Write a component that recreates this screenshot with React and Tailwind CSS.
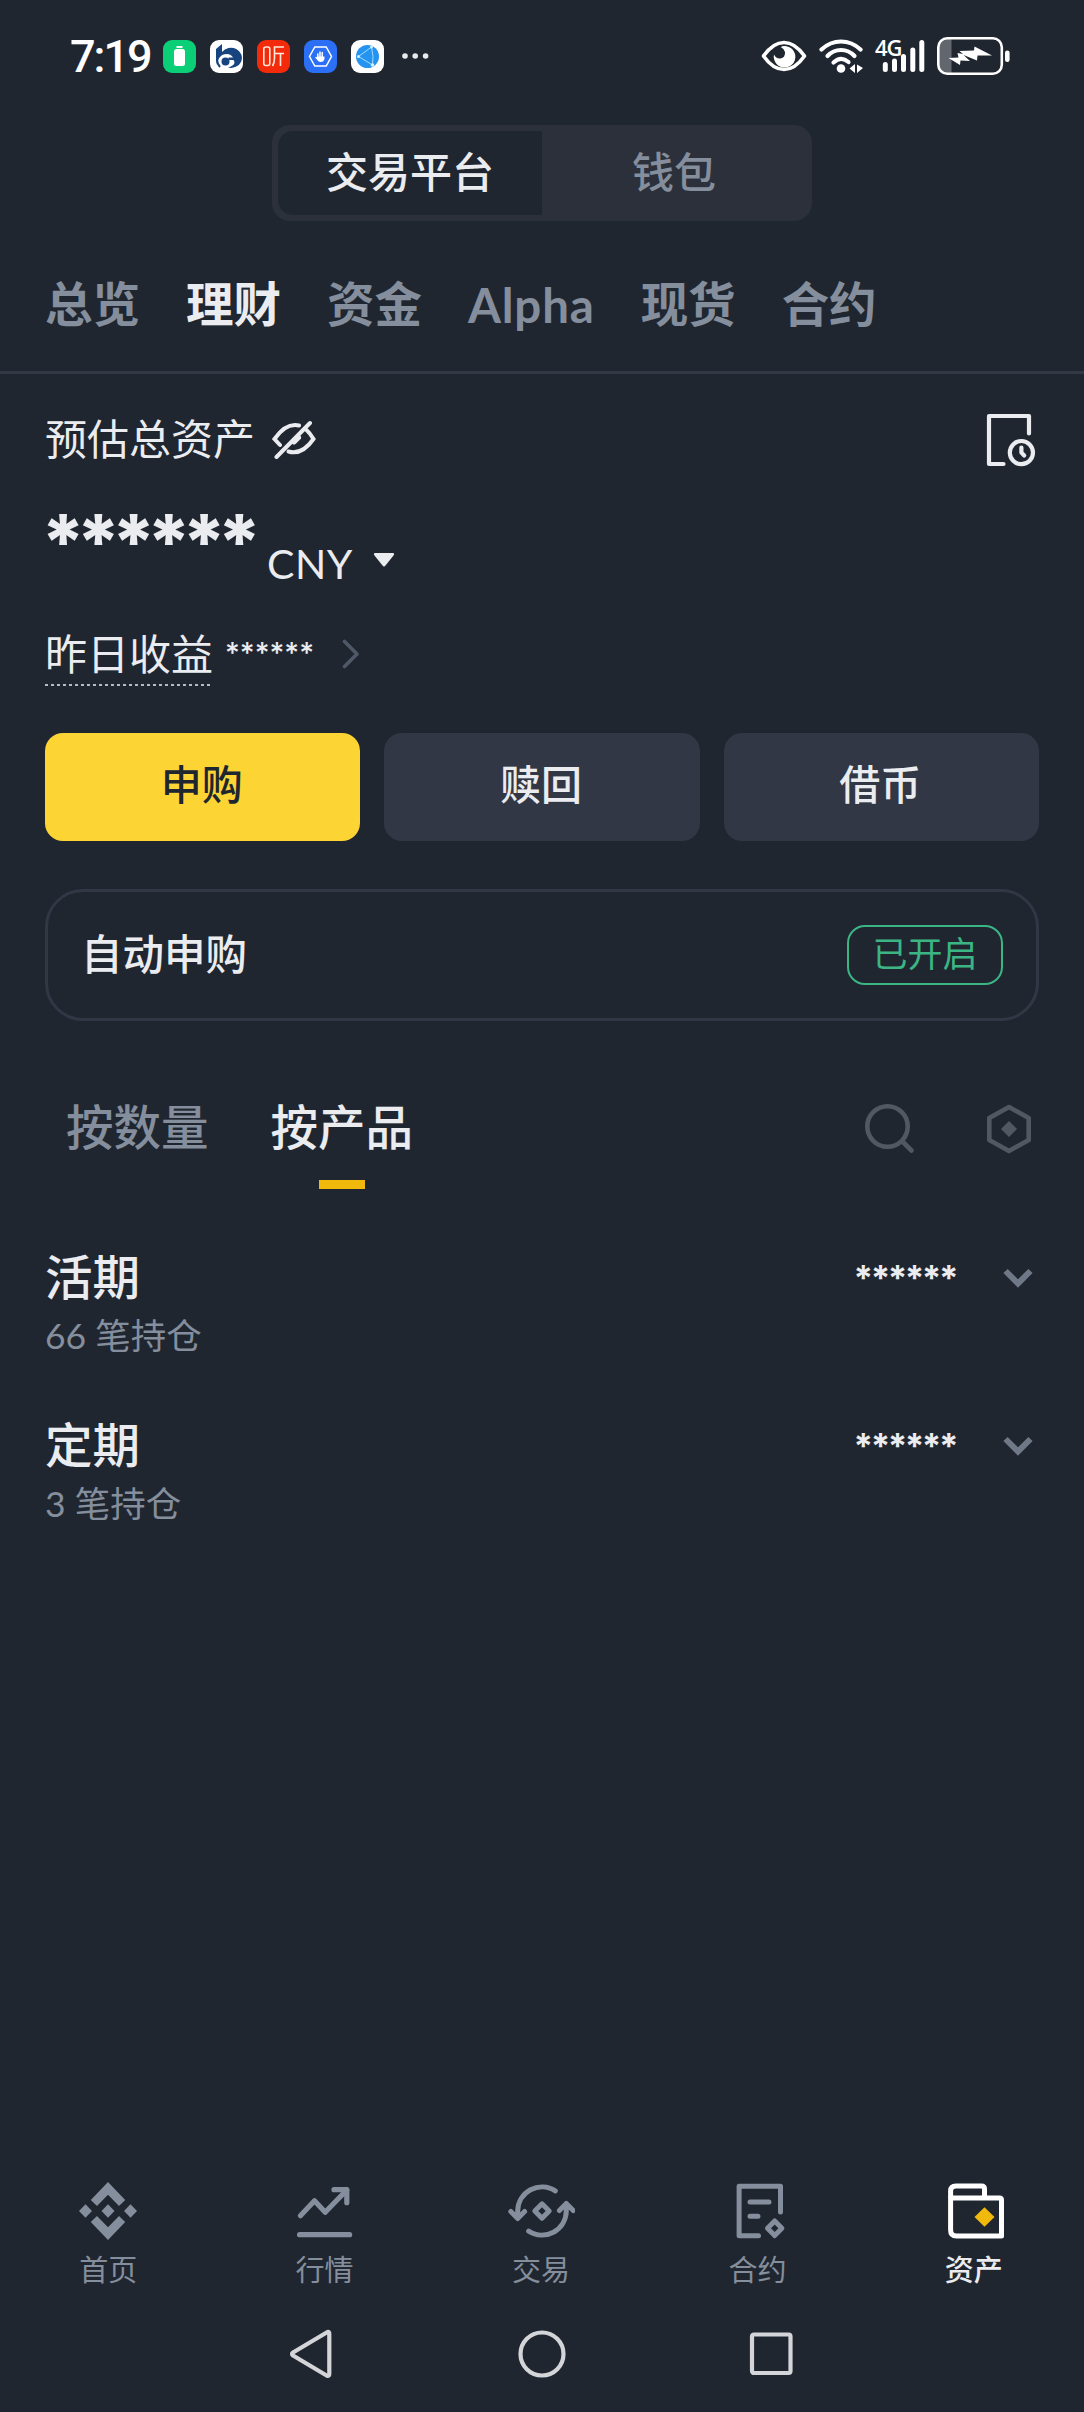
import { useState } from 'react';

const tabs = ['总览', '理财', '资金', 'Alpha', '现货', '合约'];

const actions = [
    { label: '申购', primary: true },
    { label: '赎回' },
    { label: '借币' },
];

const products = [
    { name: '活期', count: '66 笔持仓' },
    { name: '定期', count: '3 笔持仓' },
];

const HomeIcon = () => (
    <svg width="68" height="60" viewBox="0 0 68 60" fill="currentColor">
        <path d="M34 1 L51.2 19 L45 25 L34 13.8 L23 25 L16.8 19 Z" />
        <path d="M34 59 L51.2 41 L45 35 L34 46.2 L23 35 L16.8 41 Z" />
        <path d="M34 23.3 L40.5 30 L34 36.7 L27.5 30 Z" />
        <path d="M11.5 23.3 L18 30 L11.5 36.7 L5 30 Z" />
        <path d="M56.5 23.3 L63 30 L56.5 36.7 L50 30 Z" />
    </svg>
);

const MarketIcon = () => (
    <svg width="68" height="60" viewBox="0 0 68 60" fill="none" stroke="currentColor" strokeWidth="5.2" strokeLinecap="round" strokeLinejoin="round">
        <path d="M9.4 34.7 L23.5 19.7 L34.2 31.3 L55.8 9" />
        <path d="M43 8.7 H55.8 V21.7" />
        <path d="M8.6 53.7 H58.6" />
    </svg>
);

const TradeIcon = () => (
    <svg width="68" height="60" viewBox="-1 0 68 60" fill="none" stroke="currentColor" strokeWidth="5" strokeLinecap="round" strokeLinejoin="round">
        <path d="M47.3 9.8 A24.4 24.4 0 0 0 9.7 30 V37 M2.8 30.5 L9.7 37.5 L16.6 30.5" />
        <path d="M20.7 50.2 A24.4 24.4 0 0 0 58.3 30 V23 M51.4 29.5 L58.3 22.5 L65.2 29.5" />
        <path d="M34 22.8 L41.2 30 L34 37.2 L26.8 30 Z" />
    </svg>
);

const FuturesIcon = () => (
    <svg width="68" height="60" viewBox="-1.5 0 68 60" fill="none" stroke="currentColor" strokeWidth="5" strokeLinecap="round" strokeLinejoin="round">
        <path d="M56 31 V5.2 H14.6 V54.8 H34" />
        <path d="M25.5 21 H44.5 M25.5 35.2 H33.5" />
        <path d="M50.2 40 L57.4 47.3 L50.2 54.6 L43 47.3 Z" />
    </svg>
);

const AssetsIcon = () => (
    <svg width="68" height="60" viewBox="-1.5 0 68 60" fill="none" stroke="#ffffff" strokeWidth="5" strokeLinejoin="round">
        <path d="M9.1 17 V10 Q9.1 5 14.5 5 H40 Q43 5 43 8 V17" />
        <path d="M9.1 17 H58 Q60 17 60 19 V55 H15 Q9.1 55 9.1 49 Z" />
        <path d="M43 26.2 L53 36 L43 45.8 L33 36 Z" fill="#f0b90b" stroke="none" />
    </svg>
);

const navItems = [
    { label: '首页', icon: HomeIcon },
    { label: '行情', icon: MarketIcon },
    { label: '交易', icon: TradeIcon },
    { label: '合约', icon: FuturesIcon },
    { label: '资产', icon: AssetsIcon },
];

const StatusBar = () => (
    <div className="flex h-28 shrink-0 items-center justify-between pl-[70px] pr-[73px] text-white">
        <div className="flex items-center">
            <span className="w-[93px] pt-0.5 text-[45px] leading-[56px] font-medium tracking-[-2px] font-[Roboto,sans-serif]">7:19</span>
            <div className="flex gap-3.5">
                <svg width="33" height="33" viewBox="0 0 33 33">
                    <rect width="33" height="33" rx="9" fill="#0acf77" />
                    <rect x="13.5" y="6" width="6" height="2" fill="#fff" />
                    <rect x="11" y="9" width="11" height="17" rx="2.5" fill="#fff" />
                </svg>
                <svg width="33" height="33" viewBox="0 0 33 33">
                    <rect width="33" height="33" rx="9" fill="#fff" />
                    <path d="M6 9 L12 4 V15 Q7 18 6 25 Z" fill="#17437f" />
                    <path d="M12 12 A11 10 0 1 1 18 27.5 Q27 25 23.5 20 H18.5 V17.5 H23 Q20 12 12 15 Z" fill="#17437f" />
                    <path d="M10 27 Q4 20 11 14.5" stroke="#17437f" strokeWidth="2" fill="none" />
                    <circle cx="15.5" cy="21.5" r="4" fill="#17437f" />
                </svg>
                <svg width="33" height="33" viewBox="0 0 33 33" fill="none" stroke="#ffe9dc" strokeWidth="1.6">
                    <rect width="33" height="33" rx="9" fill="#f32b0a" stroke="none" />
                    <rect x="6.8" y="7" width="6" height="18.5" rx="2" />
                    <path d="M27 7 H17.5 V18 Q17.5 23 15.5 26 M17.5 13.5 H27 M23.5 13.5 V26" />
                </svg>
                <svg width="33" height="33" viewBox="0 0 33 33" fill="none">
                    <rect width="33" height="33" rx="9" fill="#2a6ff5" />
                    <path d="M10.8 7 H22.2 L27.5 16.5 L22.2 26 H10.8 L5.5 16.5 Z" stroke="#fff" strokeWidth="1.5" />
                    <path d="M13.8 14 V18 M16 12 V18 M18.2 12.5 V18 M12 17.5 L14.5 20" stroke="#fff" strokeWidth="1.5" strokeLinecap="round" />
                    <path d="M13 16.5 H20.5 V18.5 Q20 22 16.5 22 Q14 22 13 19 Z" fill="#fff" />
                </svg>
                <svg width="33" height="33" viewBox="0 0 33 33" fill="none">
                    <rect width="33" height="33" rx="9" fill="#fff" />
                    <circle cx="16.5" cy="16.5" r="11.5" fill="#2494f0" />
                    <path d="M20.5 7 L7.5 16.5 L21.5 25 M20.5 7 Q23 17 21.5 25" stroke="#a5dcff" strokeWidth="1" />
                    <circle cx="20.5" cy="7" r="1.5" fill="#d6f0ff" />
                    <circle cx="7.5" cy="16.5" r="1.5" fill="#d6f0ff" />
                    <circle cx="21.5" cy="25" r="1.8" fill="#d6f0ff" />
                </svg>
            </div>
            <svg className="ml-[18px]" width="27" height="8" viewBox="0 0 27 8" fill="#e8e9ea">
                <circle cx="3" cy="4" r="2.8" />
                <circle cx="13.2" cy="4" r="2.8" />
                <circle cx="23.6" cy="4" r="2.8" />
            </svg>
        </div>

        <div className="flex items-center">
            <svg width="46" height="34" viewBox="0 0 46 34" fill="none">
                <path d="M2.5 17 Q12 3.5 23 3.5 Q34 3.5 43.5 17 Q34 30.5 23 30.5 Q12 30.5 2.5 17 Z" stroke="#fff" strokeWidth="3.6" strokeLinejoin="round" />
                <path d="M21 7.3 A10.8 10.8 0 1 1 13 15.5 Q15 20 19.5 19.5 Q24.5 18.5 24 13 Q23.5 10 20 8.3 Z" fill="#fff" />
            </svg>
            <svg className="ml-3" width="45" height="36" viewBox="0 0 45 36" fill="none" stroke="#fff" strokeWidth="4.2" strokeLinecap="round">
                <path d="M2.5 11.5 Q11 3.5 22 3.5 Q33 3.5 41.5 11.5" />
                <path d="M8.5 18 Q14 12 22 12 Q30 12 35.5 18" />
                <path d="M14.5 24.5 Q22 17.5 29.5 24" />
                <circle cx="22" cy="30.5" r="4.3" fill="#fff" stroke="none" />
                <path d="M36 26 V35 L30.5 30.5 Z M38 35 V26.5 L44 30 Z" fill="#fff" stroke="none" />
            </svg>
            <div className="relative ml-[11px] h-9 w-[52px]">
                <svg width="52" height="36" viewBox="0 0 52 36" stroke="#fff" strokeWidth="5" strokeLinecap="round">
                    <path d="M10.3 26.5 V31.5 M19.5 23 V31.5 M28.5 18.5 V31.5 M37.8 12 V31.5 M46.8 4.5 V31.5" />
                </svg>
                <span className="absolute -top-[2px] left-0 text-[22px] leading-[22px] font-semibold font-['Open_Sans',sans-serif] tracking-[-1px]">4G</span>
            </div>
            <svg className="ml-[10px]" width="74" height="38" viewBox="0 0 74 38" fill="none">
                <path d="M2 8 Q2 2 8 2 H14.5 V36 H8 Q2 36 2 30 Z" fill="#62676f" />
                <rect x="1.3" y="1.3" width="63.5" height="35.4" rx="9" stroke="#fff" strokeWidth="2.6" />
                <rect x="68" y="13.5" width="4.6" height="11.5" rx="2.3" fill="#fff" />
                <path d="M11.5 21 L21.5 20.5 L20.5 16 L26 17 L22.5 14 L37 13.5 L37.5 9.5 L55 18.5 L40.5 18.5 L40 23.5 L26.5 18 L33 24 L23.5 23.5 L23 28 Z" fill="#fff" />
            </svg>
        </div>
    </div>
);

const App = () => {
    const [platform, setPlatform] = useState('交易平台');
    const [activeTab, setActiveTab] = useState('理财');
    const [groupBy, setGroupBy] = useState('按产品');

    return (
        <div className="flex h-[2412px] w-[1084px] flex-col overflow-hidden bg-[#202630] text-[#eaecf0] font-[Lato,'Noto_Sans_CJK_SC',sans-serif]">
            <StatusBar />

            <div className="mx-auto mt-[13px] flex h-24 w-[540px] shrink-0 rounded-[18px] bg-[#2b303b] p-1.5">
                {['交易平台', '钱包'].map((item) => (
                    <button
                        key={item}
                        onClick={() => setPlatform(item)}
                        className={`flex-1 pb-0.5 text-[42px] font-medium ${platform === item ? 'rounded-l-[15px] bg-[#202630]' : 'text-[#848e9c]'}`}
                    >
                        {item}
                    </button>
                ))}
            </div>

            <div className="flex h-[153px] shrink-0 items-center gap-[46px] border-b-3 border-[#333845] pl-[45px] pt-4 text-[47.5px] leading-[56px] font-bold">
                {tabs.map((tab) => (
                    <button
                        key={tab}
                        onClick={() => setActiveTab(tab)}
                        className={`${activeTab === tab ? '' : 'text-[#848e9c]'} ${tab === 'Alpha' ? 'pt-0.5 tracking-[0.8px]' : ''}`}
                    >
                        {tab}
                    </button>
                ))}
            </div>

            <div className="flex flex-1 flex-col px-[45px]">
                <div className="flex h-[130px] items-center justify-between">
                    <div className="flex items-center gap-[17px] text-[42px]">
                        <span>预估总资产</span>
                        <svg width="44" height="40" viewBox="0 0 44 40" fill="none" stroke="currentColor" strokeWidth="4" strokeLinecap="round">
                            <path d="M4.5 38 L38 4" />
                            <path d="M27 6.5 Q14 3.5 2.5 20 L8 26" />
                            <path d="M34.5 11 Q38 14 41.5 20 Q30 36.5 16.5 32.5" />
                            <path d="M22 22.5 L26 18.5" strokeWidth="6" />
                        </svg>
                    </div>
                    <svg className="mr-px mt-0.5" width="52" height="54" viewBox="0 0 52 54" fill="none" stroke="currentColor" strokeWidth="4.2" strokeLinecap="round" strokeLinejoin="round">
                        <path d="M43 20.5 V3 H3 V51 H17.5" />
                        <circle cx="35.4" cy="39.6" r="11.6" />
                        <path d="M35.4 34.5 V39.6 L38.2 42.5" />
                    </svg>
                </div>

                <div className="flex h-24 items-start">
                    <span className="-ml-1 w-[226px] text-[76px] leading-[74px] font-extrabold tracking-[-9px] font-[Inter,sans-serif]">******</span>
                    <span className="mt-8 w-[106px] text-[41px] leading-[56px] tracking-[0.5px]">CNY</span>
                    <svg className="mt-12" width="22" height="16" viewBox="0 0 22 16" fill="currentColor">
                        <path d="M2 1 H20 Q22 1.5 20.5 3.5 L12.5 13.5 Q11 15.5 9.5 13.5 L1.5 3.5 Q0 1.5 2 1 Z" />
                    </svg>
                </div>

                <div className="flex h-[108px] items-center">
                    <div className="relative text-[42px]">
                        昨日收益
                        <svg className="absolute left-0 top-[61px]" width="165" height="2" viewBox="0 0 165 2" stroke="#eaecf0" strokeWidth="1.5">
                            <path d="M0 1 H165" strokeDasharray="3 3" />
                        </svg>
                    </div>
                    <span className="ml-3 w-[117px] pb-0.5 text-[28.5px] leading-[36px] font-medium font-[Inter,sans-serif]">******</span>
                    <svg width="18" height="30" viewBox="0 0 18 30" fill="none" stroke="#4f5867" strokeWidth="3.6" strokeLinecap="round" strokeLinejoin="round">
                        <path d="M2.5 2.5 L15 15 L2.5 27.5" />
                    </svg>
                </div>

                <div className="mt-[25px] grid grid-cols-3 gap-6">
                    {actions.map((action) => (
                        <button
                            key={action.label}
                            className={`h-[108px] rounded-[18px] pb-1 pr-0.5 text-[41px] font-medium ${action.primary ? 'bg-[#fcd535] text-[#202630]' : 'bg-[#313744]'}`}
                        >
                            {action.label}
                        </button>
                    ))}
                </div>

                <div className="mt-12 flex h-[132px] items-center justify-between rounded-[38px] border-3 border-[#313744] pl-[33px] pr-[33px]">
                    <span className="pb-0.5 text-[41.5px] font-medium">自动申购</span>
                    <span className="flex h-[60px] w-[156px] items-center justify-center rounded-[18px] border-2 border-[#3bb584] pb-1 text-[35px] text-[#3bb584]">
                        已开启
                    </span>
                </div>

                <div className="mt-11 flex h-[124px] items-center justify-between pl-[21px]">
                    <div className="flex h-full gap-[62px] text-[47.5px]">
                        {['按数量', '按产品'].map((item) => (
                            <button
                                key={item}
                                onClick={() => setGroupBy(item)}
                                className={`relative font-medium ${groupBy === item ? '' : 'text-[#848e9c]'}`}
                            >
                                {item}
                                {groupBy === item && <span className="absolute bottom-0 left-1/2 h-[9px] w-[46px] -translate-x-1/2 bg-[#f0b90b]" />}
                            </button>
                        ))}
                    </div>
                    <div className="mr-[7px] mt-1 flex items-center gap-[70px] text-[#525862]">
                        <svg width="52" height="52" viewBox="0 0 52 52" fill="none" stroke="currentColor" strokeWidth="4.6" strokeLinecap="round">
                            <circle cx="23.5" cy="23.5" r="20.2" />
                            <path d="M38.5 38.5 L47.5 47.5" />
                        </svg>
                        <svg width="46" height="52" viewBox="0 0 46 52" fill="none" stroke="currentColor" strokeWidth="4.6" strokeLinejoin="round">
                            <path d="M23 4 L42.7 15 V37 L23 48 L3.3 37 V15 Z" />
                            <path d="M23 18 L31 26 L23 34 L15 26 Z" fill="currentColor" stroke="none" />
                        </svg>
                    </div>
                </div>

                <div className="mt-[60px] flex flex-col gap-[57px]">
                    {products.map((product) => (
                        <div key={product.name} className="flex h-[111px] justify-between">
                            <div>
                                <div className="text-[47.5px] leading-[56px] font-medium">{product.name}</div>
                                <div className="mt-[7px] text-[35.5px] leading-[48px] text-[#848e9c]">{product.count}</div>
                            </div>
                            <div className="mt-px flex h-14 items-center pr-1.5">
                                <span className="pb-px text-[35px] leading-[40px] font-bold tracking-[-2.5px] font-[Inter,sans-serif]">******</span>
                                <svg className="ml-[47px]" width="30" height="20" viewBox="0 0 30 20" fill="none" stroke="#6f7887" strokeWidth="6">
                                    <path d="M2.5 3 L15 15.5 L27.5 3" />
                                </svg>
                            </div>
                        </div>
                    ))}
                </div>
            </div>

            <div className="grid h-[116px] shrink-0 grid-cols-5 pr-0.5">
                {navItems.map(({ label, icon: Icon }, index) => (
                    <button
                        key={label}
                        className={`flex flex-col items-center ${index === 4 ? 'font-medium' : 'text-[#848e9c]'}`}
                    >
                        <Icon />
                        <span className="mt-[9px] text-[29px] leading-[40px]">{label}</span>
                    </button>
                ))}
            </div>

            <div className="flex h-[115px] shrink-0 items-center pl-[288px] pb-px text-[#d4d5d8]">
                <svg width="46" height="50" viewBox="0 0 46 50" fill="none" stroke="currentColor" strokeWidth="4.2" strokeLinejoin="round">
                    <path d="M39.5 3 Q41.3 2.5 41.3 5 V45 Q41.3 47.5 39 46.8 L5 26.5 Q3 25 5 23.5 Z" />
                </svg>
                <svg className="ml-[183px]" width="50" height="50" viewBox="0 0 50 50" fill="none" stroke="currentColor" strokeWidth="4.2">
                    <circle cx="25" cy="25" r="21.5" />
                </svg>
                <svg className="ml-[181px]" width="46" height="46" viewBox="0 0 46 46" fill="none" stroke="currentColor" strokeWidth="4.2">
                    <rect x="4" y="3.5" width="38.5" height="38.5" rx="2" />
                </svg>
            </div>
        </div>
    );
};

export default App;
